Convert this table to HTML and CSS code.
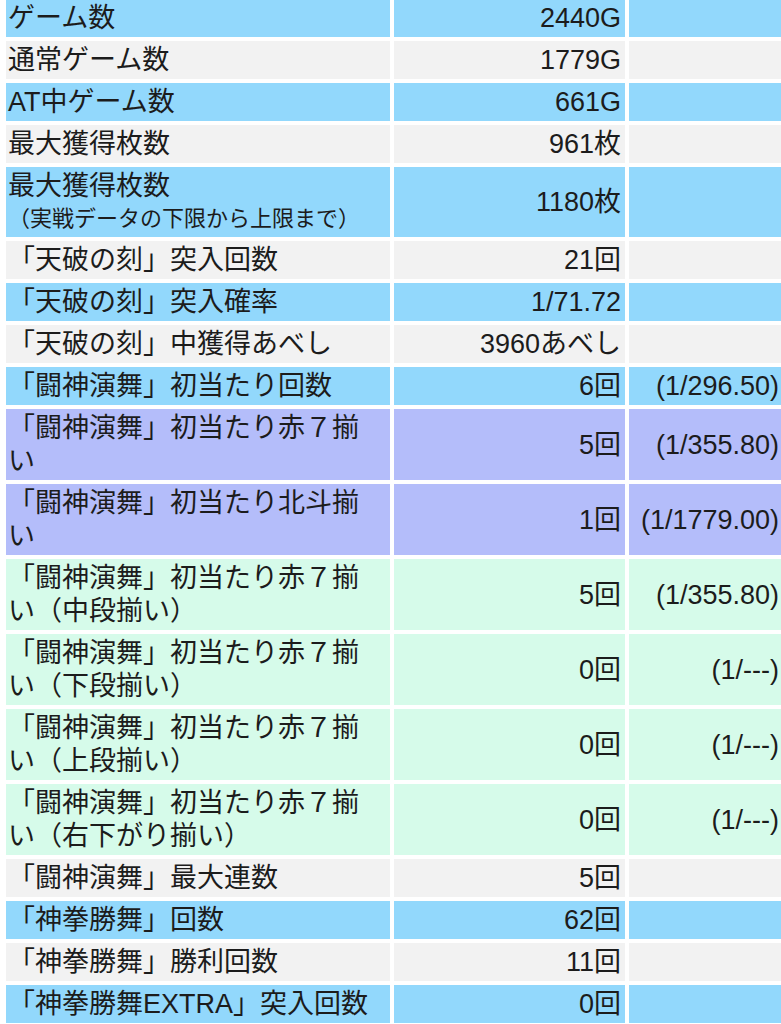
FILE: index.html
```html
<!DOCTYPE html>
<html lang="ja">
<head>
<meta charset="utf-8">
<link rel="stylesheet" href="styles.css">
</head>
<body>
<table class="data">
<colgroup><col class="c-label"><col class="c-val"><col class="c-rate"></colgroup>
<tbody>
<tr class="blue"><td class="label">ゲーム数</td><td class="val">2440G</td><td class="rate"></td></tr>
<tr class="gray"><td class="label">通常ゲーム数</td><td class="val">1779G</td><td class="rate"></td></tr>
<tr class="blue"><td class="label">AT中ゲーム数</td><td class="val">661G</td><td class="rate"></td></tr>
<tr class="gray"><td class="label">最大獲得枚数</td><td class="val">961枚</td><td class="rate"></td></tr>
<tr class="blue"><td class="label">最大獲得枚数<span class="note">（実戦データの下限から上限まで）</span></td><td class="val">1180枚</td><td class="rate"></td></tr>
<tr class="gray"><td class="label">「天破の刻」突入回数</td><td class="val">21回</td><td class="rate"></td></tr>
<tr class="blue"><td class="label">「天破の刻」突入確率</td><td class="val">1/71.72</td><td class="rate"></td></tr>
<tr class="gray"><td class="label">「天破の刻」中獲得あべし</td><td class="val">3960あべし</td><td class="rate"></td></tr>
<tr class="blue"><td class="label">「闘神演舞」初当たり回数</td><td class="val">6回</td><td class="rate">(1/296.50)</td></tr>
<tr class="lav"><td class="label">「闘神演舞」初当たり赤７揃い</td><td class="val">5回</td><td class="rate">(1/355.80)</td></tr>
<tr class="lav"><td class="label">「闘神演舞」初当たり北斗揃い</td><td class="val">1回</td><td class="rate">(1/1779.00)</td></tr>
<tr class="mint"><td class="label">「闘神演舞」初当たり赤７揃い（中段揃い）</td><td class="val">5回</td><td class="rate">(1/355.80)</td></tr>
<tr class="mint"><td class="label">「闘神演舞」初当たり赤７揃い（下段揃い）</td><td class="val">0回</td><td class="rate">(1/---)</td></tr>
<tr class="mint"><td class="label">「闘神演舞」初当たり赤７揃い（上段揃い）</td><td class="val">0回</td><td class="rate">(1/---)</td></tr>
<tr class="mint"><td class="label">「闘神演舞」初当たり赤７揃い（右下がり揃い）</td><td class="val">0回</td><td class="rate">(1/---)</td></tr>
<tr class="gray"><td class="label">「闘神演舞」最大連数</td><td class="val">5回</td><td class="rate"></td></tr>
<tr class="blue"><td class="label">「神拳勝舞」回数</td><td class="val">62回</td><td class="rate"></td></tr>
<tr class="gray"><td class="label">「神拳勝舞」勝利回数</td><td class="val">11回</td><td class="rate"></td></tr>
<tr class="blue"><td class="label">「神拳勝舞EXTRA」突入回数</td><td class="val">0回</td><td class="rate"></td></tr>
</tbody>
</table>
</body>
</html>
```
FILE: styles.css
```css
html, body {
  margin: 0;
  padding: 0;
  background: #ffffff;
  overflow: hidden;
}
body {
  font-family: "Liberation Sans", "Noto Sans CJK JP", sans-serif;
  color: #1c1c1c;
}
.data {
  border-collapse: separate;
  border-spacing: 4px;
  table-layout: fixed;
  width: 793px;
  margin: -5px 0 0 2px;
}
.c-label { width: 384px; }
.c-val { width: 231px; }
.c-rate { width: 166px; }
.data td {
  font-size: 27px;
  line-height: 33px;
  padding: 3px 4px 2px 4px;
  vertical-align: middle;
}
.data td.label {
  padding: 3px 12px 2px 2px;
  text-align: left;
}
.data td.val {
  text-align: right;
  padding-right: 4px;
}
.data td.rate {
  text-align: right;
  padding-right: 16px;
}
.note {
  display: block;
  font-size: 22px;
  line-height: 32px;
}
.blue td { background: #92d8fc; }
.gray td { background: #f2f2f2; }
.lav td { background: #b4bdfa; }
.mint td { background: #d6fbea; }
```
